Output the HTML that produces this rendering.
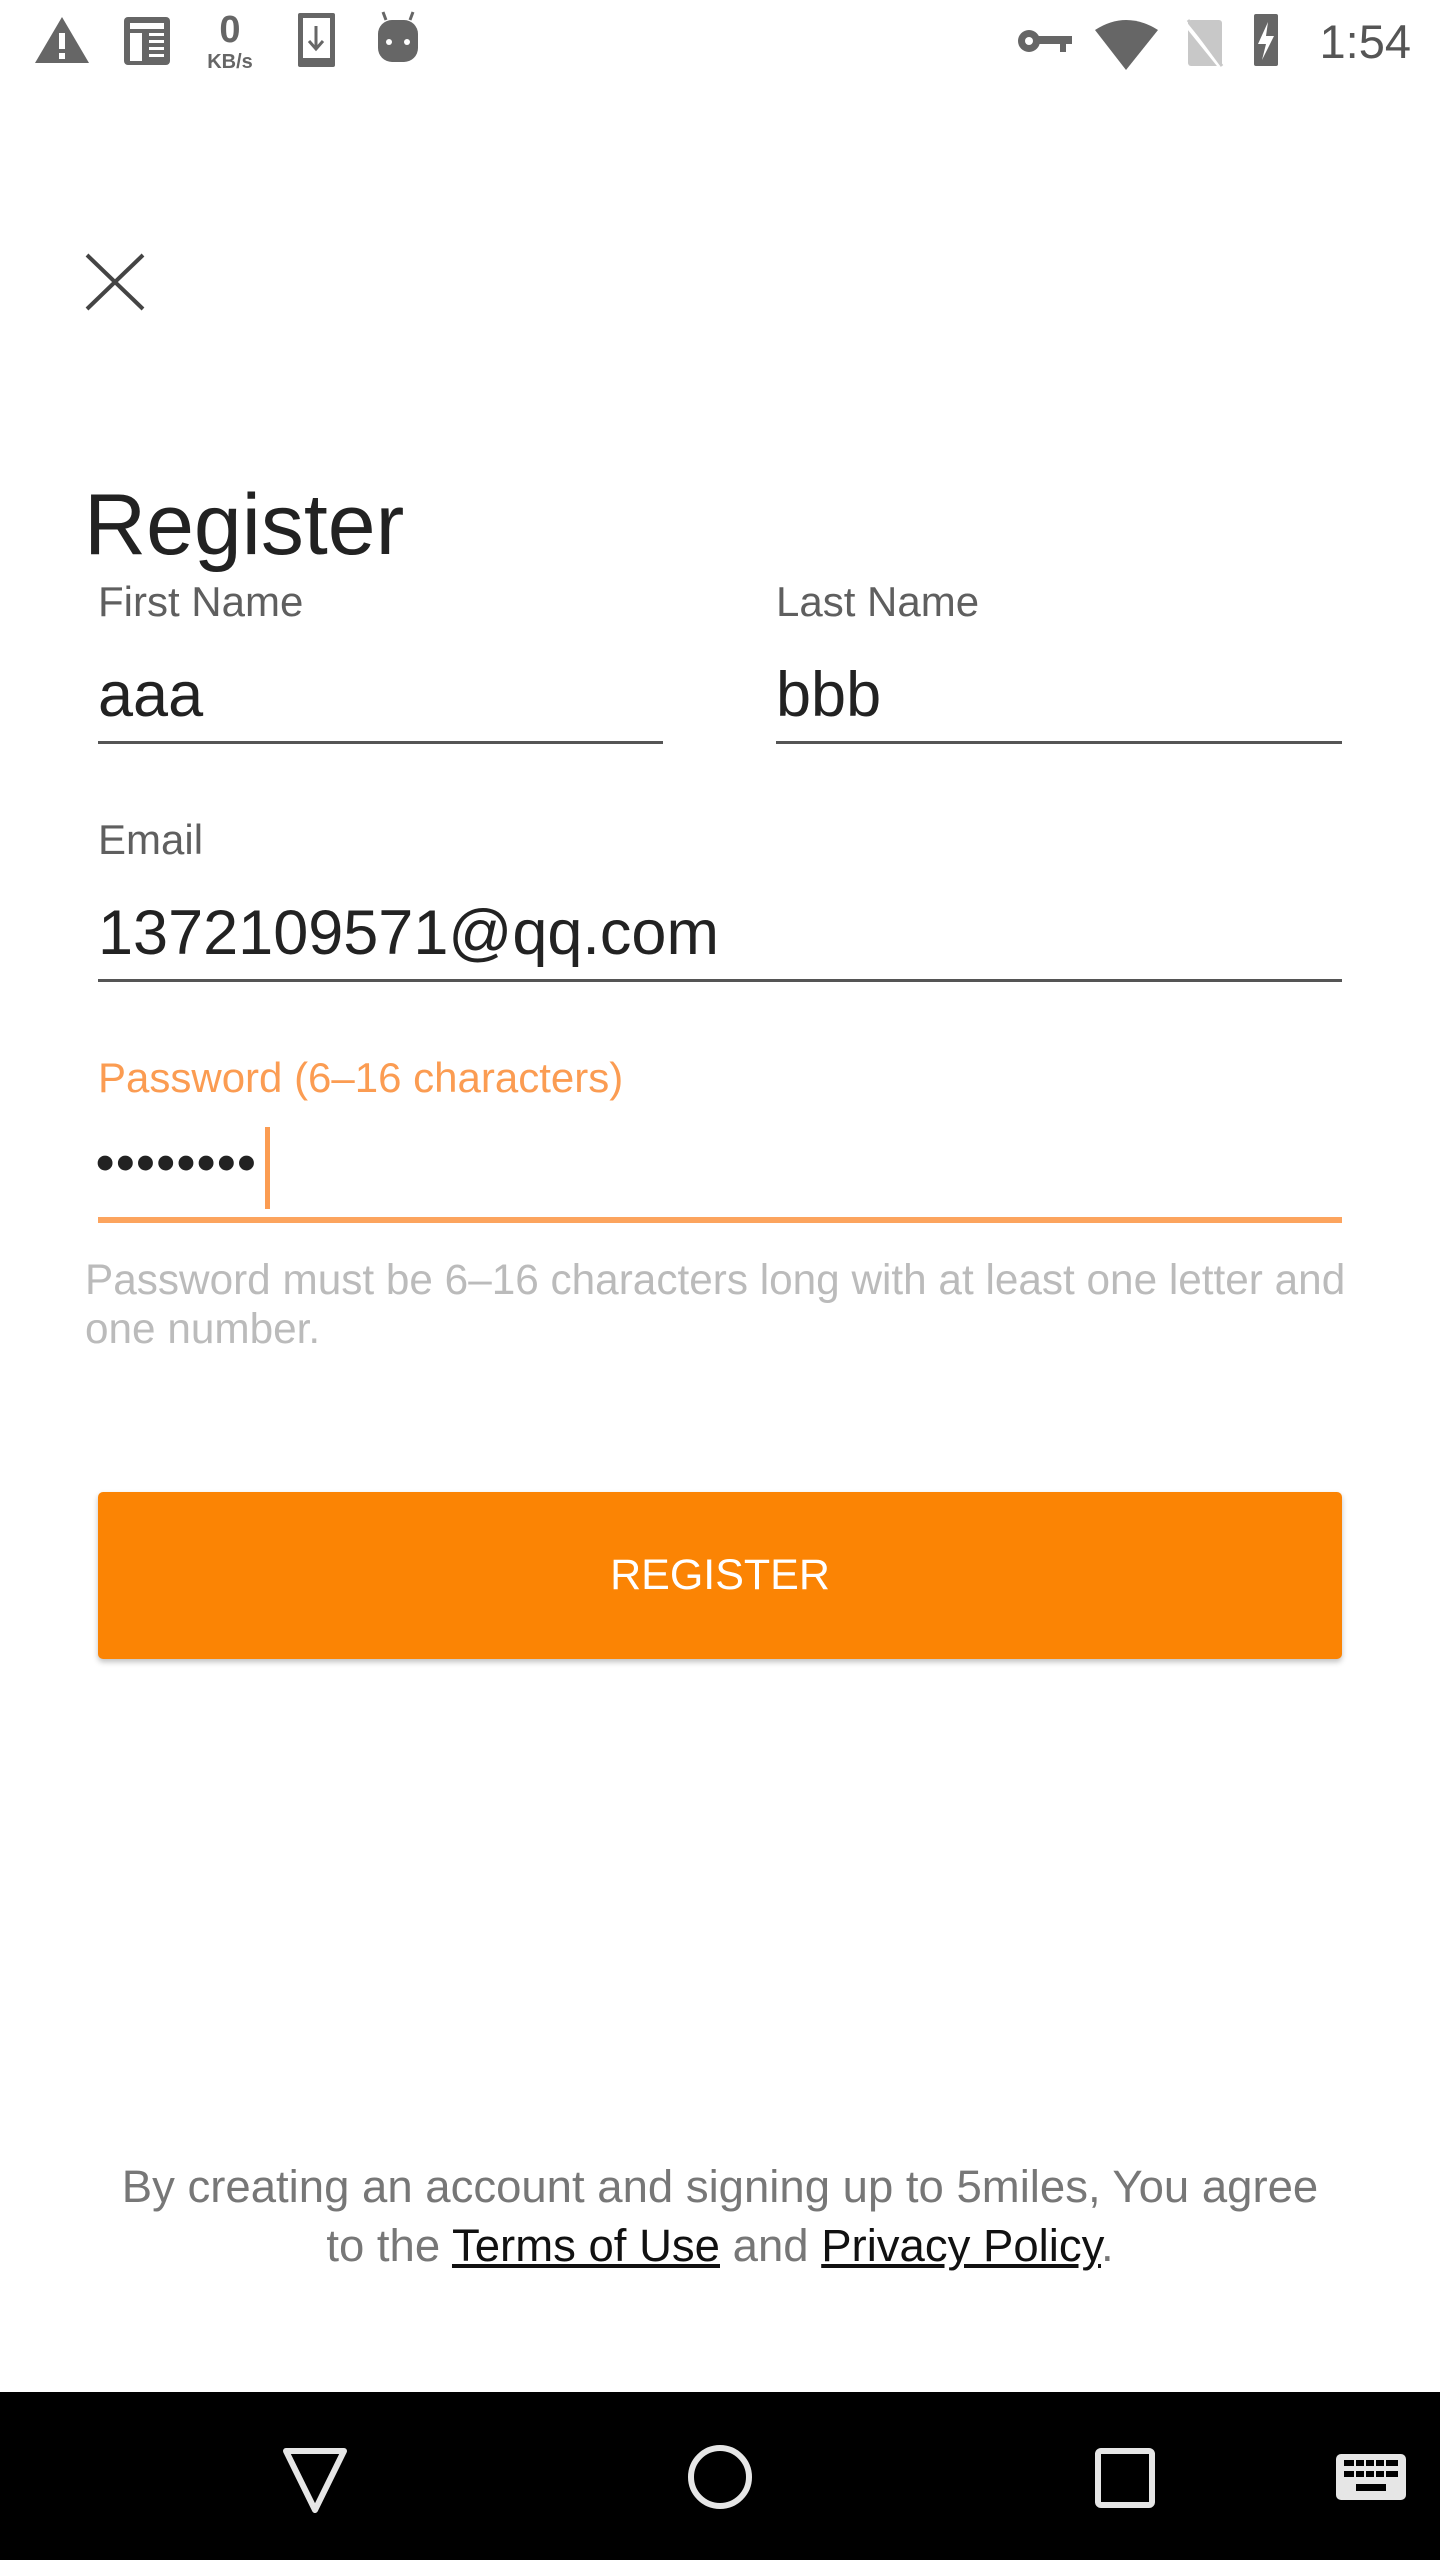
<!DOCTYPE html>
<html><head><meta charset="utf-8"><style>
*{margin:0;padding:0;box-sizing:border-box}
html,body{width:1440px;height:2560px;background:#fff;overflow:hidden;font-family:"Liberation Sans",Arial,sans-serif;position:relative}
.a{position:absolute;white-space:nowrap}
.lbl{font-size:42px;color:#5f5f5f}
.inp{font-size:63px;color:#222}
.ul{position:absolute;height:3px;background:#555}
</style></head><body>
<svg class="a" style="left:0;top:0" width="1440" height="90" viewBox="0 0 1440 90">
 <g fill="#666">
  <path d="M62 17 L89 63 L35 63 Z"/>
  <rect x="124" y="17" width="46" height="48" rx="4"/>
  <rect x="298" y="13" width="37" height="54" rx="2"/>
  <rect x="378" y="20" width="40" height="42" rx="14"/>
  <rect x="1018" y="30" width="22" height="22" rx="11"/>
  <path d="M1036 36h36v8h-6v8h-6v-8h-24z"/>
  <path d="M1095 30 Q1126 10 1158 30 L1126 70 Z"/>
  <rect x="1254" y="14" width="24" height="52" rx="2"/>
 </g>
 <g fill="#fff">
  <rect x="59" y="33" width="6" height="16"/><rect x="59" y="53" width="6" height="6"/>
  <rect x="130" y="23" width="34" height="6"/><rect x="130" y="33" width="12" height="28"/>
  <rect x="149" y="33" width="15" height="3"/><rect x="149" y="40" width="15" height="3"/><rect x="149" y="47" width="15" height="3"/><rect x="149" y="54" width="15" height="3"/>
  <rect x="303" y="18" width="27" height="40"/>
  <circle cx="389" cy="42" r="3"/><circle cx="407" cy="42" r="3"/>
  <circle cx="1029" cy="41" r="4"/>
  <path d="M1268 22 L1258 44 L1266 44 L1262 60 L1274 36 L1266 36 Z"/>
 </g>
 <path d="M316 26v22M309 41l7 8 7-8" stroke="#666" stroke-width="3" fill="none"/>
 <path d="M386 20 L383 12 M410 20 L413 12" stroke="#666" stroke-width="3"/>
 <rect x="1188" y="20" width="34" height="46" rx="3" fill="#c8c8c8"/>
 <path d="M1184 22 L1226 74" stroke="#fff" stroke-width="4"/>
 <path d="M1188 20 L1222 66" stroke="#c8c8c8" stroke-width="3"/>
 <text x="230" y="42" font-family="Liberation Sans" font-weight="bold" font-size="38" fill="#666" text-anchor="middle">0</text>
 <text x="230" y="68" font-family="Liberation Sans" font-weight="bold" font-size="20" fill="#666" text-anchor="middle">KB/s</text>
 <text x="1411" y="58" font-family="Liberation Sans" font-size="47" fill="#555" text-anchor="end">1:54</text>
</svg>
<svg class="a" style="top:252px;left:84px" width="62" height="60"><path d="M3 3L59 57M59 3L3 57" stroke="#444" stroke-width="4"/></svg>
<div class="a" style="left:84px;top:476px;font-size:86px;color:#222">Register</div>
<div class="a lbl" style="left:98px;top:578px">First Name</div>
<div class="a lbl" style="left:776px;top:578px">Last Name</div>
<div class="a inp" style="left:98px;top:659px">aaa</div>
<div class="a inp" style="left:776px;top:659px">bbb</div>
<div class="ul" style="left:98px;width:565px;top:741px"></div>
<div class="ul" style="left:776px;width:566px;top:741px"></div>
<div class="a lbl" style="left:98px;top:816px">Email</div>
<div class="a inp" style="left:98px;top:897px">1372109571@qq.com</div>
<div class="ul" style="left:98px;width:1244px;top:979px"></div>
<div class="a lbl" style="left:98px;top:1054px;color:#fb9c52">Password (6–16 characters)</div>
<div class="a" style="left:96px;top:1133px;font-size:52px;color:#222;letter-spacing:2px;font-weight:bold">••••••••</div>
<div class="a" style="left:265px;top:1127px;width:5px;height:82px;background:#fb9c52"></div>
<div class="a" style="left:98px;top:1217px;width:1244px;height:6px;background:#fca45e"></div>
<div class="a" style="left:85px;top:1255px;font-size:42.3px;line-height:49px;color:#bbb;white-space:normal;width:1300px">Password must be 6–16 characters long with at least one letter and one number.</div>
<div class="a" style="left:98px;top:1492px;width:1244px;height:167px;background:#fb8404;border-radius:5px;box-shadow:0 3px 6px rgba(0,0,0,.25);color:#fff;font-size:43px;text-align:center;line-height:167px">REGISTER</div>
<div class="a" style="left:0;width:1440px;top:2157px;text-align:center;font-size:45.5px;line-height:59px;color:#777">By creating an account and signing up to 5miles, You agree<br>to the <span style="color:#111;text-decoration:underline">Terms of Use</span> and <span style="color:#111;text-decoration:underline">Privacy Policy</span>.</div>
<div class="a" style="left:0;top:2392px;width:1440px;height:168px;background:#000"></div>
<svg class="a" style="left:0;top:2392px" width="1440" height="168">
 <path d="M286 59 L344 59 L315 118 Z" stroke="#e6e6e6" stroke-width="6" fill="none" stroke-linejoin="round"/>
 <circle cx="720" cy="85" r="29" stroke="#e6e6e6" stroke-width="6" fill="none"/>
 <rect x="1098" y="59" width="54" height="54" rx="3" stroke="#e6e6e6" stroke-width="6" fill="none"/>
 <rect x="1336" y="62" width="70" height="46" rx="5" fill="#e6e6e6"/>
 <g fill="#000"><rect x="1344" y="68" width="54" height="6"/><rect x="1344" y="79" width="54" height="6"/><rect x="1356" y="92" width="30" height="7"/></g>
 <g fill="#e6e6e6"><rect x="1354" y="66" width="2" height="22"/><rect x="1364" y="66" width="2" height="22"/><rect x="1374" y="66" width="2" height="22"/><rect x="1384" y="66" width="2" height="22"/></g>
</svg>
</body></html>
